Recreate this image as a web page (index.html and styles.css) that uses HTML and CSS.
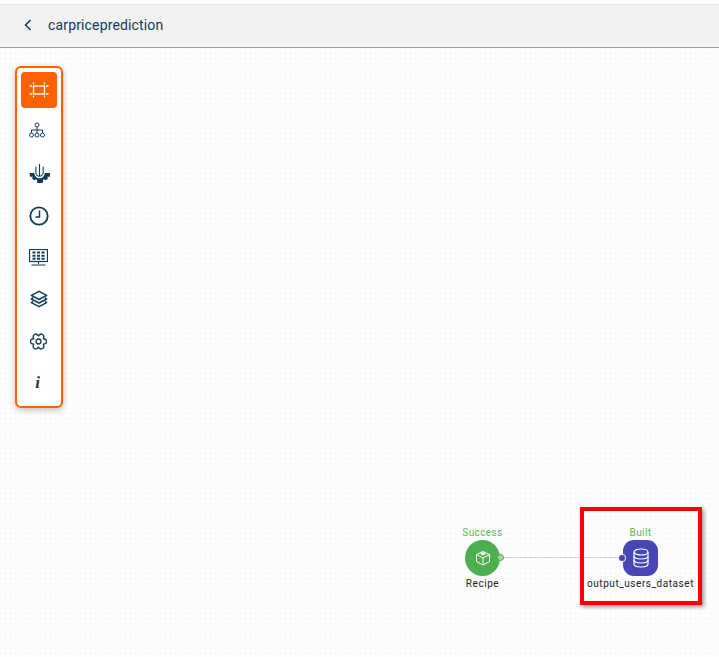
FILE: index.html
```html
<!DOCTYPE html>
<html lang="en">
  <head>
    <meta charset="UTF-8" />
    <title>carpriceprediction</title>
    <link rel="stylesheet" href="styles.css">
  </head>
  <body>
    <header class="topbar">
      <svg class="back-icon" width="10" height="14" viewBox="0 0 10 14">
        <path d="M7.5 2 L2.5 7 L7.5 12" fill="none" stroke="currentColor" stroke-width="1.5" />
      </svg>
      <span class="topbar-title">carpriceprediction</span>
    </header>

    <main class="canvas">
      <nav class="toolbar">
        <div class="tool tool-active">
          <svg width="20" height="16" viewBox="0 0 20 16" fill="none" stroke="currentColor" stroke-width="1.300">
            <rect x="4.500" y="4" width="11" height="8" />
            <path d="M.5 4h2.500M17 4h2.500M.5 12h2.500M17 12h2.500M4.500 .5V2.500M15.500 .5V2.500M4.500 13.500v2M15.500 13.500v2" />
          </svg>
        </div>
        <div class="tool tool-narrow">
          <svg width="16" height="16" viewBox="0 0 16 16" fill="none" stroke="currentColor" stroke-width="1">
            <circle cx="8" cy="3" r="2" />
            <circle cx="2.500" cy="13" r="2" />
            <circle cx="8" cy="13" r="2" />
            <circle cx="13.500" cy="13" r="2" />
            <path d="M8 5v6M2.500 11V8h11v3" />
          </svg>
        </div>
        <div class="tool tool-low">
          <svg width="21" height="21" viewBox="0 0 20 20">
            <path d="M.5 9.500H5a5 5 0 0 0 10 0h5.500l-.5 3.500h-2.500l.5 2-2 1.500-1.500-1-1 .5-.5 3h-5l-.5-3-1-.5-1.500 1-2-1.500.5-2H1z" fill="currentColor" />
            <path d="M6.500 3.500V9a3.500 3.500 0 0 0 7 0V3.500M10 1v12" fill="none" stroke="currentColor" stroke-width="1" />
          </svg>
        </div>
        <div class="tool tool-low">
          <svg width="20" height="20" viewBox="0 0 20 20" fill="none" stroke="currentColor">
            <circle cx="10" cy="10" r="8.700" stroke-width="1.800" />
            <path d="M10.500 4.500V11H6.500" stroke-width="1.500" />
          </svg>
        </div>
        <div class="tool tool-narrow-1">
          <svg width="19" height="17" viewBox="0 0 19 17" fill="none" stroke="currentColor">
            <rect x=".5" y=".5" width="18" height="12" stroke-width="1.200" />
            <path d="M9.500 13v2M2.500 16h14" stroke-width="1" />
            <path d="M3.500 2.500h3v2h-3zM8 2.500h3v2H8zM12.500 2.500h3v2h-3zM3.500 5.700h3v2h-3zM8 5.700h3v2H8zM12.500 5.700h3v2h-3zM3.500 8.800h3v2h-3zM8 8.800h3v2H8zM12.500 8.800h3v2h-3z" fill="currentColor" stroke="none" />
          </svg>
        </div>
        <div class="tool tool-narrow-1">
          <svg width="18" height="18" viewBox="0 0 20 20" fill="none" stroke="currentColor" stroke-width="1.700" stroke-linejoin="round">
            <path d="M10 1.500 18.500 6 10 10.500 1.500 6z" />
            <path d="M3.500 8.500 1.500 10 10 14.500 18.500 10l-2-1.500" />
            <path d="M3.500 12.500 1.500 14 10 18.500 18.500 14l-2-1.500" />
          </svg>
        </div>
        <div class="tool tool-narrow-1">
          <svg width="17" height="17" viewBox="0 0 24 24" fill="none" stroke="currentColor" stroke-width="1.900" stroke-linejoin="round">
            <path d="M12 4.200C15.490-1.040 21.550 2.450 18.750 8.100C25.040 8.510 25.040 15.490 18.750 15.900C21.550 21.550 15.490 25.040 12 19.800C8.510 25.040 2.450 21.550 5.250 15.900C-1.040 15.490-1.040 8.510 5.250 8.100C2.450 2.450 8.510-1.040 12 4.200z" />
            <circle cx="12" cy="12" r="3.500" />
          </svg>
        </div>
        <div class="tool tool-info">i</div>
      </nav>

      <div class="flow-edge"></div>

      <div class="node node-recipe">
        <span class="node-status">Success</span>
        <div class="node-shape">
          <svg width="18" height="18" viewBox="0 0 18 18" fill="none" stroke="currentColor" stroke-width="1">
            <path d="M9 2.500 15.500 5.500V12.500L9 16 2.500 12.500V5.500z" />
            <path d="M2.500 5.500 9 9 15.500 5.500M9 9v7" />
            <ellipse cx="9" cy="4.800" rx="2" ry="1" fill="currentColor" />
          </svg>
          <span class="port port-out"></span>
        </div>
        <span class="node-name">Recipe</span>
      </div>

      <div class="node node-dataset">
        <span class="node-status">Built</span>
        <div class="node-shape">
          <svg width="18" height="20" viewBox="0 0 18 20" fill="none" stroke="currentColor" stroke-width="1.200">
            <ellipse cx="9" cy="4" rx="7" ry="3" />
            <path d="M2 4v12c0 1.700 3.100 3 7 3s7-1.300 7-3V4" />
            <path d="M2 8c0 1.700 3.100 3 7 3s7-1.300 7-3M2 12c0 1.700 3.100 3 7 3s7-1.300 7-3" />
          </svg>
          <span class="port port-in"></span>
        </div>
        <span class="node-name">output_users_dataset</span>
      </div>

      <div class="highlight-box"></div>
    </main>
  </body>
</html>
```
FILE: styles.css
```css
:root {
  --navy: #0f3b5c;
  --orange: #ff6100;
  --green: #4caf50;
  --indigo: #4646b4;
}

* {
  box-sizing: border-box;
}

html,
body {
  height: 100%;
  margin: 0;
  overflow: hidden;
}

body {
  display: flex;
  flex-direction: column;
  font-family: Roboto, sans-serif;
  background-color: #fff;
}

.topbar {
  display: flex;
  align-items: center;
  flex: none;
  height: 44px;
  margin-top: 4px;
  padding: 0 0 2px 23px;
  column-gap: 15px;
  background-color: #f2f2f2;
  border-top: 1px solid #e4e4e4;
  border-bottom: 1px solid #a0a0a0;
  box-shadow: 0 1px 2px #00000026;
  color: var(--navy);
}

.topbar-title {
  font-size: 14px;
  letter-spacing: 0.15px;
}

.canvas {
  position: relative;
  flex: 1;
  background-color: #fdfdfd;
  background-image: radial-gradient(circle at 0.5px 0.5px, #efefef 0.5px, transparent 0.7px);
  background-size: 5px 5px;
}

.toolbar {
  position: absolute;
  top: 18px;
  left: 15px;
  display: flex;
  flex-direction: column;
  row-gap: 6px;
  width: 48px;
  height: 342px;
  padding: 4px;
  background-color: #fff;
  border: 2px solid var(--orange);
  border-radius: 6px;
  box-shadow: 0 2px 6px #00000040;
  color: var(--navy);
}

.tool {
  display: flex;
  align-items: center;
  justify-content: center;
  width: 36px;
  height: 36px;
  flex: none;
}

.tool-active {
  margin-bottom: -1px;
  background-color: var(--orange);
  border-radius: 4px;
  color: #fff;
}

.tool-narrow {
  padding: 0 4px 2px 0;
}

.tool-narrow-1 {
  padding-right: 1px;
}

.tool-low {
  padding-top: 1px;
}

.tool-info {
  padding-right: 3px;
  font-family: "Liberation Serif", serif;
  font-size: 17px;
  font-style: italic;
  font-weight: 700;
}

.flow-edge {
  position: absolute;
  top: 509px;
  left: 503px;
  width: 117px;
  height: 1px;
  background-color: #d5d5d5;
}

.node {
  position: absolute;
  top: 478px;
  display: flex;
  flex-direction: column;
  align-items: center;
  width: 120px;
}

.node-recipe {
  left: 422.5px;
}

.node-dataset {
  left: 580.5px;
}

.node-status {
  height: 14px;
  font-size: 10px;
  line-height: 14px;
  letter-spacing: 0.4px;
  color: #5cb85c;
}

.node-shape {
  position: relative;
  display: flex;
  align-items: center;
  justify-content: center;
  width: 35px;
  height: 36px;
  color: #fff;
}

.node-recipe .node-shape {
  background-color: var(--green);
  border-radius: 50%;
}

.node-dataset .node-shape {
  background-color: var(--indigo);
  border-radius: 11px;
}

.node-name {
  font-size: 10px;
  line-height: 15px;
  letter-spacing: 0.55px;
  white-space: nowrap;
  color: #222;
}

.port {
  position: absolute;
  top: 14px;
  width: 7px;
  height: 7px;
  border-radius: 50%;
}

.port-out {
  right: -4px;
  background-color: #a5d6a7;
  border: 1.5px solid var(--green);
}

.port-in {
  top: 15px;
  left: -4px;
  width: 6px;
  height: 6px;
  background-color: var(--indigo);
  box-shadow: 0 0 0 1px #e8e8f6;
}

.highlight-box {
  position: absolute;
  top: 459px;
  left: 580px;
  width: 122px;
  height: 98px;
  border: 4px solid #ff0000;
  box-shadow: 2px 2px 4px #00000066;
}
```
